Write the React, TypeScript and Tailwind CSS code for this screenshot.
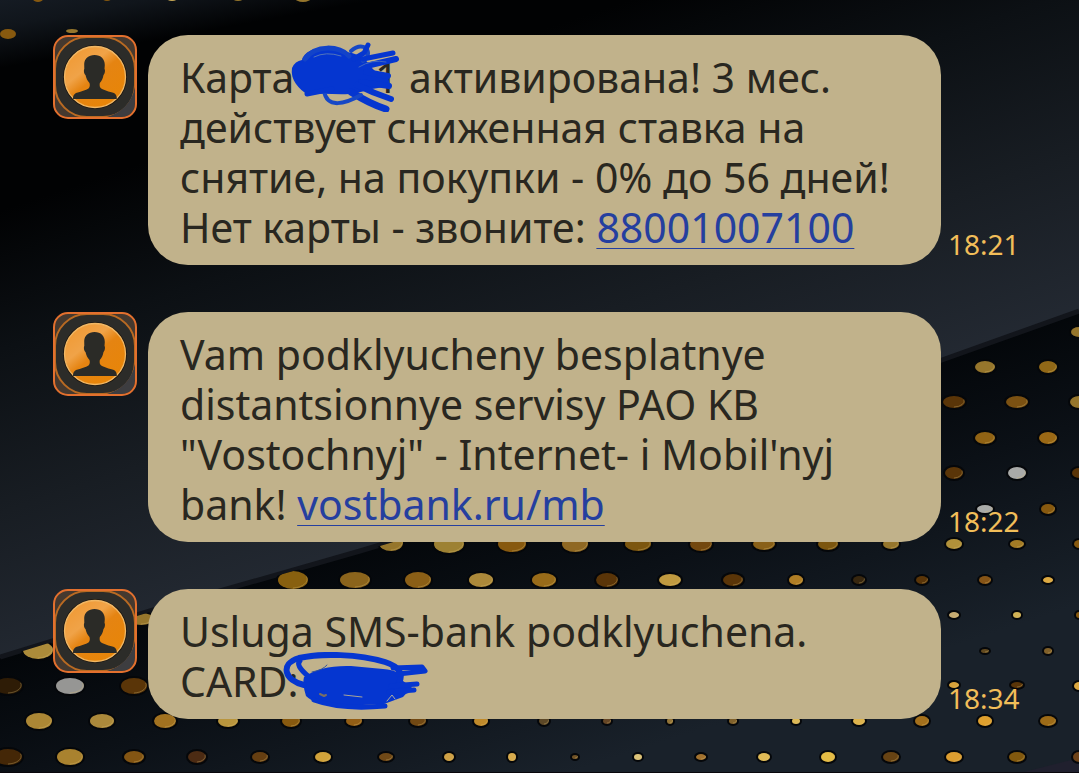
import type { ReactNode } from "react";

const GOLD = "#96762c";
const AMBER = "#87590f";
const BROWN = "#5a3508";
const DARK = "#2e1c06";
const BRIGHT = "#dda941";
const PALE = "#c9a955";
const SILVER = "#a9aaa8";

// x, y, rx, ry, colour
type Dot = [number, number, number, number, string];

const dots: Dot[] = [
  [38, -1, 5, 3, AMBER],
  [107, -2, 5, 3, AMBER],
  [172, -2, 6, 3, PALE],
  [238, -2, 6, 3, GOLD],
  [303, -2, 8, 4, GOLD],
  [8, 34, 8, 5, AMBER],
  [72, 31, 6, 2, GOLD],
  [1079, 332, 8, 5, GOLD],
  [985, 367, 10, 6, GOLD],
  [1048, 367, 9, 6, "#916817"],
  [954, 402, 11, 6, BROWN],
  [1017, 402, 11, 6, "#7b5112"],
  [1079, 402, 9, 6, GOLD],
  [985, 438, 10, 6, "#916314"],
  [1048, 438, 9, 6, "#9a6815"],
  [954, 473, 9, 6, BROWN],
  [1017, 473, 9, 6, SILVER],
  [1079, 473, 7, 5, BROWN],
  [985, 509, 8, 4, SILVER],
  [1048, 509, 7, 5, AMBER],
  [391, 543, 12, 8, GOLD],
  [449, 544, 15, 9, "#9d8133"],
  [512, 544, 14, 8, AMBER],
  [575, 544, 13, 8, "#8f6823"],
  [638, 544, 13, 7, "#7c560f"],
  [701, 544, 11, 7, "#73480f"],
  [764, 544, 11, 6, "#896018"],
  [828, 544, 10, 6, "#7c560f"],
  [891, 544, 8, 5, GOLD],
  [954, 544, 8, 5, "#b1913a"],
  [1017, 544, 7, 4, "#a37b25"],
  [1079, 544, 5, 4, AMBER],
  [293, 580, 15, 9, "#88600f"],
  [355, 580, 15, 8, "#8b641c"],
  [418, 580, 13, 8, "#8b5f16"],
  [481, 580, 12, 7, "#ac893a"],
  [544, 580, 12, 7, "#986b19"],
  [607, 580, 11, 7, BROWN],
  [670, 580, 11, 6, "#c09a40"],
  [733, 580, 10, 6, BROWN],
  [796, 580, 7, 5, "#b07e25"],
  [859, 580, 6, 4, "#38270f"],
  [922, 580, 6, 4, BROWN],
  [985, 580, 6, 4, "#865416"],
  [1048, 580, 5, 3, BRIGHT],
  [141, 619, 13, 6, GOLD],
  [954, 615, 5, 3, "#c6ab72"],
  [1017, 615, 4, 3, "#d1b255"],
  [1079, 615, 3, 3, AMBER],
  [38, 650, 15, 9, "#ac8b3a"],
  [985, 651, 4, 2, "#61491f"],
  [1048, 651, 4, 3, "#80602a"],
  [8, 686, 14, 8, DARK],
  [70, 686, 14, 8, "#969694"],
  [134, 686, 13, 8, BROWN],
  [954, 685, 5, 3, "#d8a23a"],
  [1017, 685, 6, 3, BROWN],
  [1079, 686, 5, 4, BRIGHT],
  [39, 721, 13, 8, "#ac8735"],
  [102, 721, 12, 7, "#ab893b"],
  [165, 721, 11, 7, "#a27220"],
  [228, 721, 10, 6, "#b9953d"],
  [291, 721, 9, 6, AMBER],
  [354, 721, 8, 5, "#935e15"],
  [418, 721, 8, 5, "#714813"],
  [481, 721, 7, 5, "#c08a2b"],
  [544, 721, 5, 4, "#5c4827"],
  [607, 721, 4, 3, "#654626"],
  [670, 721, 3, 3, "#927438"],
  [733, 721, 4, 3, "#81622c"],
  [796, 721, 4, 3, "#ddb957"],
  [859, 721, 6, 4, "#ddb34d"],
  [922, 721, 7, 5, "#a4701c"],
  [985, 721, 7, 5, "#dfa02e"],
  [1048, 721, 8, 5, "#9d6b17"],
  [8, 757, 14, 8, "#442707"],
  [70, 757, 13, 8, "#a9822f"],
  [134, 757, 10, 6, "#835513"],
  [197, 757, 9, 6, "#4c2b13"],
  [260, 757, 8, 5, "#653e11"],
  [323, 757, 8, 5, "#d1a23a"],
  [386, 757, 7, 4, "#704917"],
  [449, 757, 5, 4, "#cfa146"],
  [512, 757, 4, 4, "#d7ab4d"],
  [575, 757, 3, 2, "#705226"],
  [638, 757, 4, 3, "#dcc379"],
  [701, 757, 5, 3, "#a2722f"],
  [764, 757, 6, 4, "#dfba56"],
  [828, 757, 7, 5, "#e5bc45"],
  [891, 757, 8, 5, "#674313"],
  [954, 757, 8, 5, "#dc9d30"],
  [1017, 757, 8, 5, "#81580e"],
  [1079, 757, 6, 5, "#6f4318"],
];

const Wallpaper = () => (
  <svg
    className="absolute inset-0 h-full w-full"
    viewBox="0 0 1079 773"
    preserveAspectRatio="xMidYMid slice"
    aria-hidden="true"
  >
    <defs>
      <linearGradient id="sheet" gradientUnits="userSpaceOnUse" x1="390" y1="80" x2="530" y2="500">
        <stop offset="0" stopColor="#010203" />
        <stop offset="0.3" stopColor="#0c1014" />
        <stop offset="0.65" stopColor="#181d23" />
        <stop offset="1" stopColor="#232932" />
      </linearGradient>
      <linearGradient id="floor" gradientUnits="userSpaceOnUse" x1="480" y1="500" x2="570" y2="773">
        <stop offset="0" stopColor="#030609" />
        <stop offset="0.4" stopColor="#0b1016" />
        <stop offset="1" stopColor="#19212a" />
      </linearGradient>
      <linearGradient id="corner" gradientUnits="userSpaceOnUse" x1="0" y1="0" x2="12" y2="66">
        <stop offset="0" stopColor="#151b23" />
        <stop offset="0.4" stopColor="#10151b" />
        <stop offset="1" stopColor="#010203" />
      </linearGradient>
      <clipPath id="below">
        <path d="M0 658 L150 612 L360 552 L420 534 L942 361 L1079 312 V773 H0 Z" />
      </clipPath>
    </defs>
    <rect width="1079" height="773" fill="url(#sheet)" />
    <path d="M0 0 H400 L0 70 Z" fill="url(#corner)" />
    <path d="M0 658 L150 612 L360 552 L420 534 L942 361 L1079 312 V773 H0 Z" fill="url(#floor)" />
    <path
      d="M0 657 L150 611 L360 551 L420 533 L942 360 L1079 311"
      fill="none"
      stroke="#12151b"
      strokeWidth="5"
    />
    <path d="M1020 773 L1079 758 V773 Z" fill="#20202e" />
    <g>
      {dots.slice(0, 7).map(([x, y, rx, ry, fill]) => (
        <ellipse key={`${x}-${y}`} cx={x} cy={y} rx={rx} ry={ry} fill={fill} />
      ))}
    </g>
    <g clipPath="url(#below)">
      {dots.slice(7).map(([x, y, rx, ry, fill]) => (
        <g key={`${x}-${y}`}>
          <ellipse cx={x} cy={y} rx={rx + 2} ry={ry + 2} fill="#05070a" />
          <ellipse cx={x} cy={y} rx={rx} ry={ry} fill={fill} />
          <path
            d={`M${x + rx * 0.9} ${y - ry * 0.4} A${rx} ${ry} 0 0 1 ${x} ${y + ry - 1}`}
            fill="none"
            stroke="#d9bd74"
            strokeOpacity="0.35"
          />
        </g>
      ))}
    </g>
    <path d="M0 772.5 H1079" stroke="#08060b" />
  </svg>
);

const Avatar = () => (
  <svg className="h-[84px] w-[84px] shrink-0" viewBox="0 0 84 84" role="img" aria-label="Contact">
    <defs>
      <linearGradient id="disc" x1="0.1" y1="0.1" x2="0.75" y2="0.9">
        <stop offset="0" stopColor="#f09a35" />
        <stop offset="0.35" stopColor="#f0a348" />
        <stop offset="0.55" stopColor="#e58412" />
        <stop offset="1" stopColor="#e78509" />
      </linearGradient>
    </defs>
    <rect x="1" y="1" width="82" height="82" rx="14" fill="#45392f" />
    <rect x="2" y="2" width="80" height="80" rx="32" fill="#2c2c29" stroke="#b96a22" strokeWidth="2" />
    <path d="M82 52 Q77 75 54 82 H66 Q82 82 82 66 Z" fill="#3d3d40" />
    <rect x="1" y="1" width="82" height="82" rx="14" fill="none" stroke="#e3702e" strokeWidth="2" />
    <circle cx="42" cy="42" r="32" fill="#1d1710" />
    <circle cx="42" cy="42" r="30.5" fill="url(#disc)" stroke="#f0b765" strokeWidth="1.3" />
    <path
      d="M41.500 20 C48 20 51.800 24 51.800 30 L51.500 34 C52.500 35 51.800 39 50.500 40 C49.800 44 48.500 46 46.800 48 C46.300 51 46.800 53 49 54 C53 56 58 57 61 58 C63.500 59.500 63.800 61.500 63.800 64 H20 C20 61 20.500 59.500 23 58 C28 56.500 33 55 35.500 53.500 C37 52 37 50 36.500 48 C34.500 46 33.200 43 32.500 40 C31 39 30.500 35 31.300 34 L31.200 29 C31.500 23.500 35.500 20 41.500 20 Z"
      fill="#2b2b27"
    />
  </svg>
);

const CardScribble = () => (
  <svg
    className="absolute -left-1 -top-3 h-[72px] w-[112px]"
    viewBox="288 38 112 72"
    fill="none"
    stroke="#0536d0"
    strokeLinecap="round"
    strokeLinejoin="round"
    aria-hidden="true"
  >
    <path
      d="M290 66 Q293 59 300 58 C302 48 318 43 333 46 C341 48 346 51 350 51 C358 53 365 58 368 64 L374 70 L386 74 L388 84 L370 87 L355 91 C338 94 322 90 306 93 C297 87 288 78 290 66 Z"
      fill="#0536d0"
      stroke="none"
    />
    <path d="M303 57 C314 42 337 44 347 54" strokeWidth="5" stroke="#1243c9" />
    <path d="M349 49 Q357 42 364 46 Q369 53 361 59" strokeWidth="4" stroke="#1748c6" />
    <path d="M352 57 L362 51 L366 43" strokeWidth="5" />
    <path d="M361 57 L391 51" strokeWidth="5" />
    <path d="M360 65 L394 57" strokeWidth="6" />
    <path d="M364 70 L386 74 M359 80 L387 84" strokeWidth="6" />
    <path d="M355 83 Q371 91 389 97" strokeWidth="6" />
    <path d="M349 90 Q368 102 384 107" strokeWidth="7" />
    <path d="M322 89 C325 107 343 102 359 93" strokeWidth="4" stroke="#1748c6" />
    <path d="M305 92 L330 87" strokeWidth="5" />
    <path d="M312 55 Q324 49 339 54" strokeWidth="1" stroke="#5375bb" />
    <path d="M357 65 Q370 57 384 60" strokeWidth="1" stroke="#4268c0" />
  </svg>
);

const NumberScribble = () => (
  <svg
    className="absolute -left-4 -top-1 h-[60px] w-[148px]"
    viewBox="282 652 148 60"
    fill="none"
    stroke="#0536d0"
    strokeLinecap="round"
    strokeLinejoin="round"
    aria-hidden="true"
  >
    <path
      d="M303 677 Q320 665 350 666 L382 669 Q401 670 402 681 L411 687 L402 697 L383 704 L340 706 Q315 706 305 696 Q301 683 303 677 Z"
      fill="#0536d0"
      stroke="none"
    />
    <path
      d="M303 685 C284 681 278 664 298 658 C320 653 358 654 384 662 C400 667 402 675 398 683"
      strokeWidth="6"
    />
    <path d="M307 676 Q294 665 299 661" strokeWidth="5" />
    <path d="M392 668 L421 667 L424 671 L397 674" strokeWidth="5" />
    <path d="M390 686 L416 684 M388 692 L413 690 M400 693 L406 691" strokeWidth="5" />
    <path d="M313 700 Q340 710 384 706" strokeWidth="5" />
    <path d="M311 672 Q322 670 326 665" strokeWidth="1" stroke="#30529e" />
    <path d="M319 694 L323 696 L325 695" strokeWidth="2" stroke="#796f65" />
    <path d="M343 695 L361 697" strokeWidth="1" stroke="#aaa596" />
    <path d="M386 701 L391 695 L394 699" strokeWidth="1" stroke="#a9aaa0" />
  </svg>
);

const Line = ({ children }: { children: ReactNode }) => (
  <span className="block whitespace-nowrap">{children}</span>
);

const linkClass =
  "text-[#253f9f] underline decoration-1 underline-offset-[5px] [text-decoration-skip-ink:none]";

const messages: { time: string; body: ReactNode }[] = [
  {
    time: "18:21",
    body: (
      <>
        <Line>
          Карта
          <span className="relative inline-block w-[104px] text-right">
            1
            <CardScribble />
          </span>{" "}
          активирована! 3 мес.
        </Line>
        <Line>действует сниженная ставка на</Line>
        <Line>снятие, на покупки - 0% до 56 дней!</Line>
        <Line>
          Нет карты - звоните:{" "}
          <a href="tel:88001007100" className={linkClass}>
            88001007100
          </a>
        </Line>
      </>
    ),
  },
  {
    time: "18:22",
    body: (
      <>
        <Line>Vam podklyucheny besplatnye</Line>
        <Line>distantsionnye servisy PAO KB</Line>
        <Line>"Vostochnyj" - Internet- i Mobil'nyj</Line>
        <Line>
          bank!{" "}
          <a href="#mb" className={linkClass}>
            vostbank.ru/mb
          </a>
        </Line>
      </>
    ),
  },
  {
    time: "18:34",
    body: (
      <>
        <Line>Usluga SMS-bank podklyuchena.</Line>
        <Line>
          CARD:
          <span className="relative inline-block h-[50px] w-[120px] align-top">
            <NumberScribble />
          </span>
        </Line>
      </>
    ),
  },
];

const App = () => {
  return (
    <main className="relative min-h-screen overflow-hidden bg-[#06080b] font-['Noto_Sans',sans-serif]">
      <Wallpaper />
      <div className="relative flex flex-col gap-[47px] pt-[35px] pr-[61px] pb-[54px] pl-[53px]">
        {messages.map((message) => (
          <article key={message.time} className="flex">
            <Avatar />
            <p className="ml-[11px] min-w-0 flex-1 rounded-[40px] bg-[#c1b28b] px-8 pt-[17px] pb-[13px] text-[41px] leading-[50px] text-[#292720]">
              {message.body}
            </p>
            <time className="ml-[7px] w-[70px] shrink-0 self-end text-[28px] leading-[42px] text-[#f2be59]">
              {message.time}
            </time>
          </article>
        ))}
      </div>
    </main>
  );
};

export default App;
